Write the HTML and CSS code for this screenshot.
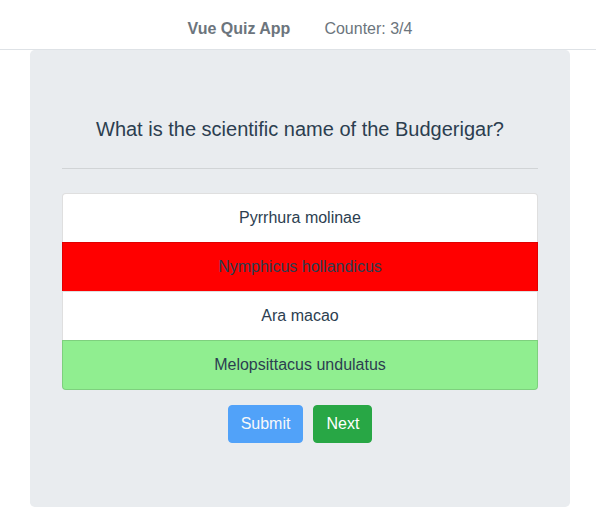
FILE: index.html
```html
<!DOCTYPE html>
<html>
<head>
<meta charset="utf-8">
<link rel="stylesheet" href="styles.css">
</head>
<body>
<div class="app">
  <ul class="nav-tabs">
    <li class="nav-item"><span class="nav-link"><strong>Vue Quiz App</strong></span></li>
    <li class="nav-item"><span class="nav-link">Counter: 3/4</span></li>
  </ul>
  <div class="jumbotron">
    <p class="lead">What is the scientific name of the Budgerigar?</p>
    <hr class="divider">
    <div class="list-group">
      <div class="list-group-item">Pyrrhura molinae</div>
      <div class="list-group-item incorrect">Nymphicus hollandicus</div>
      <div class="list-group-item">Ara macao</div>
      <div class="list-group-item correct">Melopsittacus undulatus</div>
    </div>
    <div class="actions">
      <button class="btn btn-primary" disabled>Submit</button>
      <button class="btn btn-success">Next</button>
    </div>
  </div>
</div>
</body>
</html>
```
FILE: styles.css
```css
* { box-sizing: border-box; }
html, body { margin: 0; padding: 0; background: #fff; }
body {
  font-family: "Liberation Sans", Arial, sans-serif;
  font-size: 16px;
  line-height: 1.5;
  color: #2c3e50;
  text-align: center;
}
.app { padding-top: 8px; }
.nav-tabs {
  display: flex;
  justify-content: center;
  list-style: none;
  margin: 0;
  padding: 0 0 0 4px;
  border-bottom: 1px solid #dee2e6;
}
.nav-item { margin-bottom: -1px; }
.nav-link {
  display: block;
  padding: 8px 16px;
  border: 1px solid transparent;
  color: #6c757d;
}
.nav-link strong { font-weight: 700; }
.jumbotron {
  width: 540px;
  margin: 0 0 32px 30px;
  padding: 64px 32px;
  background: #e9ecef;
  border-radius: 4.8px;
}
.lead {
  margin: 0 0 16px;
  font-size: 20px;
  font-weight: 300;
  line-height: 1.5;
}
.divider {
  margin: 24px 0;
  border: 0;
  border-top: 1px solid rgba(0,0,0,.1);
  height: 0;
}
.list-group {
  display: flex;
  flex-direction: column;
  margin-bottom: 15px;
}
.list-group-item {
  padding: 12px 20px;
  background: #fff;
  border: 1px solid rgba(0,0,0,.125);
  margin-bottom: -1px;
}
.list-group-item:first-child { border-top-left-radius: 4px; border-top-right-radius: 4px; }
.list-group-item:last-child { margin-bottom: 0; border-bottom-left-radius: 4px; border-bottom-right-radius: 4px; }
.list-group-item.incorrect { background: red; }
.list-group-item.correct { background: lightgreen; }
.actions {
  display: flex;
  justify-content: center;
  gap: 10px;
}
.btn {
  font-family: inherit;
  font-size: 16px;
  line-height: 1.5;
  padding: 6px 12px;
  border: 1px solid transparent;
  border-radius: 4px;
  color: #fff;
  cursor: pointer;
}
.btn-primary { background: #007bff; border-color: #007bff; }
.btn-primary:disabled { opacity: .65; }
.btn-success { background: #28a745; border-color: #28a745; }
```
